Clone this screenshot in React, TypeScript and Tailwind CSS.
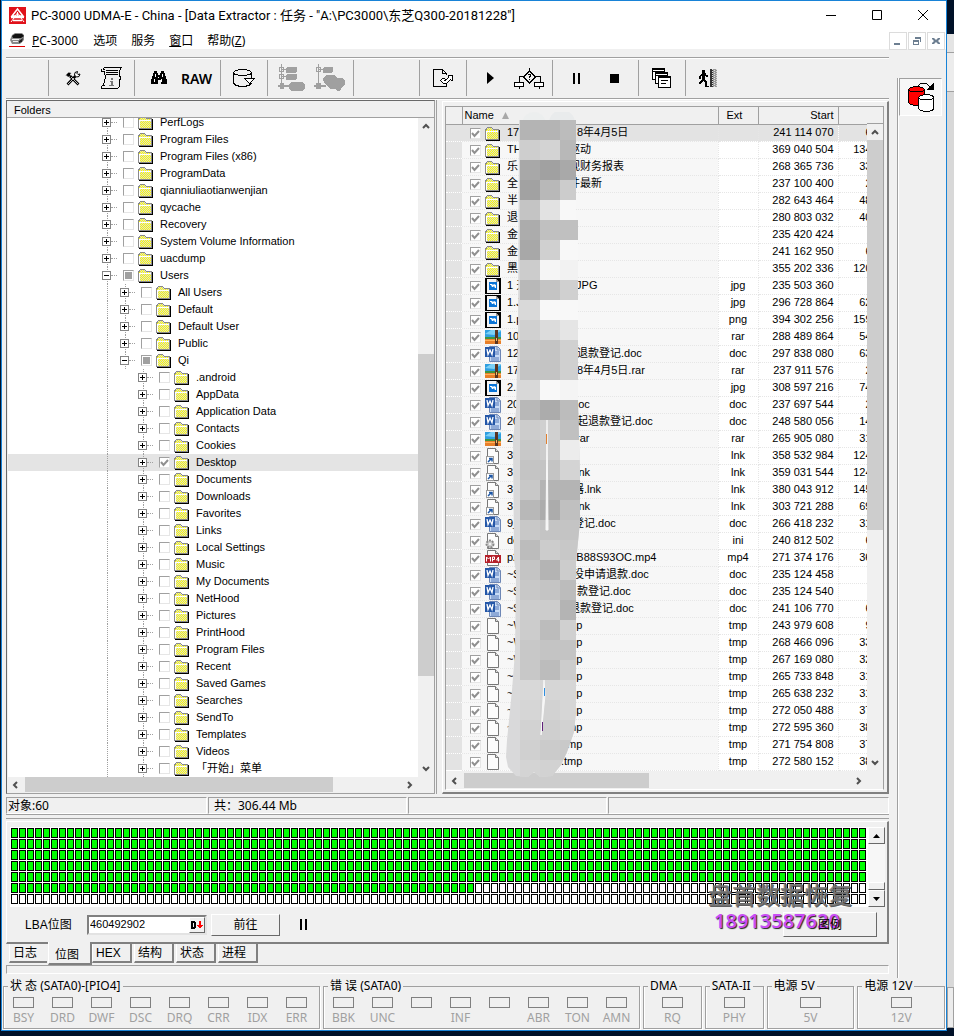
import { useState, type ReactNode } from "react";
import { clsx } from "clsx";

type TreeNode = { name: string; level: number; open?: boolean; check?: "part" | "on" };

const TREE: TreeNode[] = [
  ...["PerfLogs", "Program Files", "Program Files (x86)", "ProgramData", "qianniuliaotianwenjian", "qycache", "Recovery", "System Volume Information", "uacdump"].map((name) => ({ name, level: 0 })),
  { name: "Users", level: 0, open: true, check: "part" },
  ...["All Users", "Default", "Default User", "Public"].map((name) => ({ name, level: 1 })),
  { name: "Qi", level: 1, open: true, check: "part" },
  ...[".android", "AppData", "Application Data", "Contacts", "Cookies"].map((name) => ({ name, level: 2 })),
  { name: "Desktop", level: 2, check: "on" },
  ...["Documents", "Downloads", "Favorites", "Links", "Local Settings", "Music", "My Documents", "NetHood", "Pictures", "PrintHood", "Program Files", "Recent", "Saved Games", "Searches", "SendTo", "Templates", "Videos", "「开始」菜单"].map((name) => ({ name, level: 2 })),
];

type Kind = "dir" | "img" | "rar" | "doc" | "lnk" | "ini" | "mp4" | "tmp";
type Gap = "s" | "m" | "l" | "xl";

// kind, name start, name end, gap, ext, start, size
const FILES: [Kind, string, string, Gap, string, string, string][] = [
  ["dir", "17", "8年4月5日", "xl", "", "241 114 070", "6"],
  ["dir", "TH", "驱动", "m", "", "369 040 504", "134"],
  ["dir", "乐", "视财务报表", "m", "", "268 365 736", "33"],
  ["dir", "全", "件最新", "m", "", "237 100 400", "2"],
  ["dir", "半", "", "m", "", "282 643 464", "48"],
  ["dir", "退", "", "m", "", "280 803 032", "40"],
  ["dir", "金", "", "m", "", "235 420 424", ""],
  ["dir", "金", "", "m", "", "241 162 950", "6"],
  ["dir", "黑", "", "m", "", "355 202 336", "120"],
  ["img", "1 天", ".JPG", "l", "jpg", "235 503 360", ""],
  ["img", "1.J", "", "m", "jpg", "296 728 864", "62"],
  ["img", "1.p", "", "m", "png", "394 302 256", "159"],
  ["rar", "10", "", "m", "rar", "288 489 864", "54"],
  ["doc", "12", "退款登记.doc", "xl", "doc", "297 838 080", "63"],
  ["rar", "17", "8年4月5日.rar", "xl", "rar", "237 911 576", "2"],
  ["img", "2.", "", "m", "jpg", "308 597 216", "74"],
  ["doc", "20", ".doc", "m", "doc", "237 697 544", "2"],
  ["doc", "20", "起退款登记.doc", "xl", "doc", "248 580 056", "14"],
  ["rar", "20", ".rar", "l", "rar", "265 905 080", "31"],
  ["lnk", "39", "", "m", "lnk", "358 532 984", "124"],
  ["lnk", "3", ".lnk", "l", "lnk", "359 031 544", "124"],
  ["lnk", "3", "器.lnk", "l", "lnk", "380 043 912", "145"],
  ["lnk", "3", ".lnk", "l", "lnk", "303 721 288", "69"],
  ["doc", "9_", "登记.doc", "l", "doc", "266 418 232", "31"],
  ["ini", "de", "", "m", "ini", "240 812 502", "6"],
  ["mp4", "p2", "KB88S93OC.mp4", "m", "mp4", "271 374 176", "36"],
  ["doc", "~$", "没申请退款.doc", "l", "doc", "235 124 458", ""],
  ["doc", "~$", "款登记.doc", "xl", "doc", "235 124 540", ""],
  ["doc", "~$", "退款登记.doc", "m", "doc", "241 106 770", "6"],
  ["tmp", "~W", ".tmp", "s", "tmp", "243 979 608", "9"],
  ["tmp", "~W", ".tmp", "s", "tmp", "268 466 096", "33"],
  ["tmp", "~W", ".tmp", "s", "tmp", "267 169 080", "32"],
  ["tmp", "~", ".tmp", "s", "tmp", "265 733 848", "31"],
  ["tmp", "~", ".tmp", "s", "tmp", "265 638 232", "31"],
  ["tmp", "~", ".tmp", "s", "tmp", "272 050 488", "37"],
  ["tmp", "~", ".tmp", "s", "tmp", "272 595 360", "38"],
  ["tmp", "~", ".tmp", "s", "tmp", "271 754 808", "37"],
  ["tmp", "~", ".tmp", "s", "tmp", "272 580 152", "38"],
];

const GAPS: Record<Gap, string> = { s: "w-[54px]", m: "w-[62px]", l: "w-[66px]", xl: "w-[70px]" };

const UI = "font-['Noto_Sans','Noto_Sans_CJK_SC',sans-serif]";
const SMALL = "font-['Liberation_Sans','Noto_Sans_CJK_SC',sans-serif]";
const RAISED = "border border-t-white border-l-white border-r-[#696969] border-b-[#696969] bg-[#f0f0f0]";
const SUNKEN = "border border-t-[#a0a0a0] border-l-[#a0a0a0] border-r-white border-b-white";

function Folder() {
  return (
    <svg width="16" height="16" viewBox="0 0 16 16" shapeRendering="crispEdges" className="shrink-0">
      <defs>
        <pattern id="dither" width="2" height="2" patternUnits="userSpaceOnUse">
          <rect width="2" height="2" fill="#d8d8d8" />
          <rect width="1" height="1" fill="#ffff00" />
          <rect x="1" y="1" width="1" height="1" fill="#ffff00" />
        </pattern>
      </defs>
      <g transform="translate(0 2)">
        <path d="M15 3v11H1v-1h13V3z" fill="#000" />
        <path d="M0 2h1V1h1V0h5v1h1v1h6v11H0z" fill="#8a8a8a" />
        <path d="M1 3h1V1h5v1h1v1h5v9H1z" fill="url(#dither)" />
        <path d="M1 4h12v1H2v7H1z" fill="#fff" />
      </g>
    </svg>
  );
}

function FileIcon({ kind }: { kind: Kind }) {
  if (kind === "dir") return <Folder />;
  const page = (
    <>
      <path d="M2.500.5h8l3 3v12h-11z" fill="#fcfcfc" stroke="#777" />
      <path d="M10.500.5v3h3" fill="#ddd" stroke="#777" />
    </>
  );
  return (
    <svg width="16" height="16" viewBox="0 0 16 16" className="shrink-0">
      {kind === "img" && (
        <>
          <rect width="16" height="16" fill="#000" />
          <path d="M2 1h9l3 3v11H2z" fill="#f4f4f4" />
          <path d="M11 1v3h3z" fill="#999" />
          <rect x="4" y="4" width="8" height="8" fill="#0a74d6" />
          <path d="M5 6h2l1 1 1-1 2 1v3h-1L9 8 8 9H7L6 7H5z" fill="#fff" />
        </>
      )}
      {kind === "rar" && (
        <>
          <rect y="1" width="16" height="7" fill="#2f9fe0" />
          <path d="M0 5l6-4h10v1L9 6z" fill="#7cd0f5" />
          <rect y="8" width="16" height="2" fill="#3f9440" />
          <rect y="10" width="16" height="5" fill="#e8802a" />
          <rect y="11" width="16" height="1" fill="#ffb25c" />
          <rect x="10" y="1" width="3" height="14" fill="#5b3420" />
          <rect x="11" y="9" width="1" height="3" fill="#e8c46a" />
        </>
      )}
      {kind === "doc" && (
        <>
          <path d="M4.500.5h8l3 3v12h-11z" fill="#c9dcf6" stroke="#6d86b5" />
          <path d="M12 1v3h3" fill="none" stroke="#6d86b5" />
          <path d="M10 6h4M10 8h4M6 12h8M6 14h8" stroke="#5478b8" />
          <rect y="1" width="10" height="10" fill="#2457a8" />
          <path d="M2 3l1 5.500L5 4l2 4.500L8 3" fill="none" stroke="#fff" strokeWidth="1.300" />
        </>
      )}
      {(kind === "tmp" || kind === "lnk" || kind === "ini" || kind === "mp4") && page}
      {kind === "lnk" && (
        <>
          <rect x="1.500" y="8.500" width="7" height="7" fill="#fff" stroke="#999" />
          <path d="M3 14l3-3M4 10.500h3v3" fill="none" stroke="#1c56a5" strokeWidth="1.500" />
        </>
      )}
      {kind === "ini" && (
        <>
          <circle cx="5" cy="11" r="3.500" fill="#ccc" stroke="#888" strokeWidth="2" strokeDasharray="2 1" />
          <circle cx="5" cy="11" r="1" fill="#fff" />
        </>
      )}
      {kind === "mp4" && (
        <>
          <rect y="5" width="16" height="8" fill="#b5202a" />
          <path d="M1.500 11.500V7l2 2 2-2v4.500M7.500 11.500V7h2v2.500h-2M13.500 11.500V7l-2 3h3" fill="none" stroke="#fff" />
        </>
      )}
    </svg>
  );
}

function Tick({ state, label, className }: { state?: "on" | "part"; label: string; className?: string }) {
  return (
    <input
      type="checkbox"
      aria-label={label}
      defaultChecked={state === "on"}
      className={clsx(
        "size-[11px] shrink-0 appearance-none border border-t-[#a0a0a0] border-l-[#a0a0a0] border-r-[#e6e6e6] border-b-[#e6e6e6] bg-white",
        state === "part" && "bg-[linear-gradient(#a0a0a0,#a0a0a0)] bg-[length:7px_7px] bg-center bg-no-repeat",
        state === "on" && "bg-[url('data:image/svg+xml,%3Csvg%20xmlns=%22http://www.w3.org/2000/svg%22%20viewBox=%220%200%209%209%22%3E%3Cpath%20d=%22M1%204l2.500%203L8%202%22%20fill=%22none%22%20stroke=%22%23909090%22%20stroke-width=%222%22/%3E%3C/svg%3E')] bg-[length:9px_9px] bg-center bg-no-repeat",
        className,
      )}
    />
  );
}

function Chevron({ dir }: { dir: "up" | "down" | "left" | "right" }) {
  const d = { up: "M1 6l3-3 3 3", down: "M1 2l3 3 3-3", left: "M6 1L3 4l3 3", right: "M2 1l3 3-3 3" }[dir];
  return (
    <svg width="8" height="8" viewBox="0 0 8 8">
      <path d={d} fill="none" stroke="#505050" strokeWidth="2" />
    </svg>
  );
}

function ArrowButton({ dir }: { dir: "up" | "down" | "left" | "right" }) {
  return (
    <button aria-label={dir} className="flex size-4 shrink-0 items-center justify-center">
      <Chevron dir={dir} />
    </button>
  );
}

function TreeRow({ node }: { node: TreeNode }) {
  const selected = node.name === "Desktop";
  return (
    <li className={clsx("flex h-[17px] items-center pl-[86px]", selected && "bg-[#e4e4e4]")}>
      {/* guide lines of the parent levels */}
      {Array.from({ length: node.level }).map((_, i) => (
        <span key={i} className={clsx("ml-[13px] h-[17px] w-[5px]", i === 0 && "border-l border-dotted border-[#a0a0a0]")} />
      ))}
      <span className="relative flex h-[17px] w-[29px] items-center pl-2">
        <span className="absolute top-0 left-[13px] h-[17px] border-l border-dotted border-[#a0a0a0]" />
        <button aria-label={node.open ? "collapse" : "expand"} className="relative flex size-[9px] items-center justify-center border border-[#848484] bg-white">
          <svg width="5" height="5" viewBox="0 0 5 5" shapeRendering="crispEdges">
            <path d={node.open ? "M0 2h5v1H0z" : "M0 2h5v1H0zM2 0h1v5H2z"} />
          </svg>
        </button>
        <span className="w-[6px] border-t border-dotted border-[#a0a0a0]" />
      </span>
      <Tick state={node.check} label={node.name} />
      <span className="ml-1 h-[17px]">
        <Folder />
      </span>
      <span className="ml-[6px] leading-[17px] whitespace-nowrap">{node.name}</span>
    </li>
  );
}

function FolderPanel() {
  return (
    <section className="flex w-[429px] shrink-0 flex-col border border-[#696969] border-r-[#a0a0a0] border-b-[#a0a0a0] bg-white">
      <h2 className="h-[17px] border-b border-[#a0a0a0] bg-[#f0f0f0] pl-[7px] leading-[18px]">Folders</h2>
      <div className="flex h-[659px] border-l border-[#f0f0f0]">
        <div className="min-w-0 flex-1 overflow-hidden">
          <ul className="-mt-1">
            {TREE.map((node, i) => (
              <TreeRow key={i} node={node} />
            ))}
          </ul>
        </div>
        <div className="flex w-4 flex-col bg-[#f0f0f0]">
          <ArrowButton dir="up" />
          <div className="mt-[220px] h-[322px] bg-[#cdcdcd]" />
          <div className="mt-auto">
            <ArrowButton dir="down" />
          </div>
        </div>
      </div>
      <div className="flex h-4 bg-[#f0f0f0] pr-4">
        <ArrowButton dir="left" />
        <div className="ml-[2px] h-[15px] w-[308px] bg-[#cdcdcd]" />
        <div className="ml-auto">
          <ArrowButton dir="right" />
        </div>
      </div>
    </section>
  );
}

// grey levels of the 20px blocks, one string per block row
const MOSAIC = [
  "b4b4bc", "ced3b8", "a8a1a9", "a2b8cc", "c4e2f8", "acc0c0", "a8d0f8", "ccf5f2", "b8c4d0", "d9f8f8",
  "d0dce5", "c8c4d0", "c4c4d0", "d8f8f4", "b8acbc", "ccd0c0", "c8ccec", "c4c4d4", "c8b4b4", "b8acc0",
  "c8c4c4", "bcccc8", "c4b4cc", "c8c4bc", "ccccb4", "ccbcd0", "c8c4c4", "c8bccc", "d8d6d6", "d6d2d6",
  "d2cfd2", "d0cbc9", "d4d2d4",
];

function Mosaic() {
  return (
    <svg className="absolute top-[5px] left-[60px]" width="76" height="668" viewBox="0 0 76 668" aria-hidden="true">
      <defs>
        <clipPath id="stroke">
          <path d="M13 8L12 218 10 298 7 328 8 448 10 460 9 540 6 578 1 628 0 645 2 655 10 664 22 665 28 660 34 665 46 664 55 653 61 640 68 620 70 600V450L74 410V360L72 290V108H70V8z" />
        </clipPath>
      </defs>
      <circle cx="28" cy="12" r="12" fill="#eceeee" />
      <circle cx="56" cy="11" r="13" fill="#e9ebec" />
      <g clipPath="url(#stroke)">
        <rect width="76" height="668" fill="#d9d9da" />
        {MOSAIC.map((row, r) =>
          [0, 1, 2].map((c) => {
            const v = row.slice(c * 2, c * 2 + 2);
            return <rect key={`${r}-${c}`} x={14 + c * 20} y={8 + r * 20} width="20" height="20" fill={`#${v}${v}${v}`} />;
          }),
        )}
        <path d="M41 308l-1 110h2zM38 568l-3 55 4-40z" fill="#f7f7f7" stroke="#f7f7f7" />
        <path d="M40.500 322v10" stroke="#e08030" />
        <path d="M38.500 576v8" stroke="#2f8fe0" />
        <path d="M36.500 610v9" stroke="#60207a" />
      </g>
    </svg>
  );
}

function FileTable() {
  return (
    <section className="mt-px ml-[5px] flex min-w-0 flex-1 flex-col border-t border-l border-white border-r-2 border-b-2 border-r-[#808080] border-b-[#808080] pt-1 pr-[3px] pb-px pl-[2px]">
      <div className="relative border border-[#a0a0a0] border-b-white bg-white">
        <div className="flex">
          <div className="min-w-0 flex-1 overflow-hidden">
            <table className="w-full table-fixed border-collapse">
              <thead>
                <tr className="h-[17px] bg-[#f0f0f0] text-left leading-[16px]">
                  <th className="w-4 border-r border-b border-[#a0a0a0] p-0" />
                  <th className="border-r border-b border-[#a0a0a0] p-0 pl-[2px] font-normal">
                    <span className="flex items-center gap-2">
                      Name
                      <svg width="7" height="7" viewBox="0 0 7 7"><path d="M3.500 0L7 7H0z" fill="#a8a8a8" /></svg>
                    </span>
                  </th>
                  <th className="w-10 border-r border-b border-[#a0a0a0] p-0 pl-2 font-normal">Ext</th>
                  <th className="w-20 border-r border-b border-[#a0a0a0] p-0 pr-1 text-right font-normal">Start</th>
                  <th className="w-[29px] border-b border-[#a0a0a0] p-0" />
                </tr>
              </thead>
              <tbody>
                {FILES.map(([kind, head, tail, gap, ext, start, size], i) => (
                  <tr key={i} className={clsx("h-[17px] leading-[15px]", i === 0 ? "bg-[#e3e3e3]" : "bg-white")}>
                    <td className="border-b border-dotted border-white bg-[#e3e3e3] p-0" />
                    <td className={clsx("border-r border-b border-dotted border-[#e6e6e6] p-0 pl-2", i > 0 && "bg-[#f7f7f7]")}>
                      <span className="flex h-4 items-center whitespace-nowrap">
                        <Tick state="on" label={head + tail} className="mt-px" />
                        <span className="mr-[6px] ml-1 flex">
                          <FileIcon kind={kind} />
                        </span>
                        <span className={GAPS[gap]}>{head}</span>
                        {tail}
                      </span>
                    </td>
                    <td className="border-r border-b border-dotted border-[#e6e6e6] p-0 text-center">{ext}</td>
                    <td className="border-r border-b border-dotted border-[#e6e6e6] p-0 pr-1 text-right">{start}</td>
                    <td className="overflow-hidden border-b border-dotted border-[#e6e6e6] p-0">
                      <span className="block w-[33px] text-right">{size}</span>
                    </td>
                  </tr>
                ))}
              </tbody>
            </table>
          </div>
          <div className="flex w-4 flex-col bg-[#f0f0f0]">
            <div className="h-[17px] border-b border-[#a0a0a0]" />
            <ArrowButton dir="up" />
            <div className="h-[390px] bg-[#cdcdcd]" />
            <div className="mt-auto">
              <ArrowButton dir="down" />
            </div>
          </div>
        </div>
        <div className="flex h-[18px] bg-[#f0f0f0] pt-[2px] pr-4">
          <ArrowButton dir="left" />
          <div className="ml-[2px] h-[15px] w-[185px] bg-[#cdcdcd]" />
          <div className="ml-auto">
            <ArrowButton dir="right" />
          </div>
        </div>
        <Mosaic />
      </div>
    </section>
  );
}

function Tool({ label, children }: { label: string; children: ReactNode }) {
  return (
    <button aria-label={label} className="flex h-8 min-w-8 items-center justify-center">
      {children}
    </button>
  );
}

function Group({ width, children }: { width: string; children?: ReactNode }) {
  return (
    <div className={clsx("flex h-9 shrink-0 items-center justify-center gap-[6px] border-r border-[#a0a0a0]", width)}>
      {children}
    </div>
  );
}

function Toolbar() {
  return (
    <div className="flex h-[42px] items-center overflow-hidden border-t border-b border-[#a0a0a0] shadow-[inset_0_1px_#fff,0_1px_#fff]">
      <Group width="w-[43px]" />
      <Group width="w-[86px]">
        <Tool label="tools">
          <svg width="16" height="15" viewBox="0 0 16 15">
            <path d="M5 5l8.500 8.500M10.500 5L2.500 13.500" stroke="#000" strokeWidth="2.600" />
            <path d="M6 6l7 7M9 7l-6 6" stroke="#f0f0f0" strokeWidth=".8" />
            <path d="M.5 4.500L3.500 1.500l3 .5-1.500 1 .5 1.500L3 6 2 4.500z" fill="#000" />
            <path d="M12.500.5L10 1.500 9.500 4l2 2 2.500-.5L15 3l-2 .5-1-1z" fill="#fff" stroke="#000" />
          </svg>
        </Tool>
        <Tool label="script">
          <svg width="22" height="22" viewBox="0 0 22 22" fill="none" stroke="#000" shapeRendering="crispEdges">
            <path d="M3.500.5h18M1.500 1.500v3h2M21.500.5l-2 3v5l1 2-1 4v3M4.500 3.500v3l1 3-1 5-1 3v1M1.500 18.500h3M1.500 18.500v3h16l2-2v-3M3.500 1.500l1 2" />
            <path d="M6 3.500h12M6 5.500h12M6 7.500h12" />
            <path d="M11 11h2v2h-2zM10 14h3v4h1v1h-5v-1h2v-3h-1z" fill="#777" stroke="none" />
          </svg>
        </Tool>
      </Group>
      <Group width="w-[86px]">
        <Tool label="find">
          <svg width="16" height="14" viewBox="0 0 16 14" shapeRendering="crispEdges">
            <path d="M3 0h3v2h1v2h2V2h1V0h3v2h1v3h1v3h1v5h-6V9H7v4H0V8h1V5h1V2h1z" />
            <path d="M4 3h1v3H4zM3 8h1v3H3zM11 3h1v3h-1zM10 8h1v3h-1zM7 6h1v1H7z" fill="#fff" />
          </svg>
        </Tool>
        <Tool label="raw">
          <span className="font-['Noto_Sans',sans-serif] text-[14px] font-semibold">RAW</span>
        </Tool>
      </Group>
      <Group width="w-[47px]">
        <Tool label="disk">
          <svg width="22" height="18" viewBox="0 0 22 18" fill="none" stroke="#000" shapeRendering="crispEdges">
            <path d="M.5 3.500l2-2h2l1-1h8l1 1h2l2 2v1l-2 1h-2l-1 1h-8l-1-1h-2l-2-1z" />
            <path d="M.5 4v10l2 2h2l1 1h8l1-1h2l2-2M18.500 4v5" />
            <path d="M11.500 9.500h10l-5 5z" fill="#fff" />
          </svg>
        </Tool>
      </Group>
      <Group width="w-[86px]">
        <Tool label="expand all">
          <svg width="28" height="28" viewBox="0 0 28 28" shapeRendering="crispEdges" fill="#a0a0a0">
            <path d="M1.500 3.500h4v4h-4zM1.500 10.500h4v4h-4z" fill="#f0f0f0" stroke="#a0a0a0" />
            <path d="M3 5h6v1H3zM3 12h6v1H3zM3 0h1v24H3zM0 21h12v2H0zM2 19h4v6H2z" />
            <rect x="8" y="3" width="11" height="6" rx="2" />
            <rect x="8" y="10" width="11" height="6" rx="2" />
            <rect x="11" y="18" width="16" height="9" rx="4" />
          </svg>
        </Tool>
        <Tool label="collapse all">
          <svg width="32" height="28" viewBox="0 0 32 28" shapeRendering="crispEdges" fill="#a0a0a0">
            <path d="M2.500 3.500h4v4h-4z" fill="#f0f0f0" stroke="#a0a0a0" />
            <path d="M4 0h1v24H4zM4 5h6v1H4zM0 21h12v2H0zM2 19h5v6H2z" />
            <rect x="9" y="3" width="10" height="6" rx="2" />
            <path d="M9 14l3-3h8l3 3h5l3 3v4l-3 2-2 4h-3l-2-2h-4l-4-3-3-3z" />
          </svg>
        </Tool>
      </Group>
      <Group width="w-[66px]" />
      <Group width="w-[47px]">
        <Tool label="save copy">
          <svg width="20" height="18" viewBox="0 0 20 18" fill="none" stroke="#000" shapeRendering="crispEdges">
            <path d="M13.500 6V4.500l-4-4h-9v17h13v-3M9.500.5v4h4" />
            <path d="M7.500 11.500l2-2h2l1 1-1 1h1l3-3v-2h4v5h-1l-1-1-4 4h-3z" fill="#fff" />
          </svg>
        </Tool>
      </Group>
      <Group width="w-[86px]">
        <Tool label="start">
          <svg width="7" height="12" viewBox="0 0 7 12"><path d="M0 0l7 6-7 6z" /></svg>
        </Tool>
        <Tool label="branch">
          <svg width="30" height="21" viewBox="0 0 30 21" shapeRendering="crispEdges">
            <path d="M15.500 0v3M15.500 3l6 6-6 6-6-6zM9 8.500H5v6M21 8.500h5v6M5 18v3M25 18v3" fill="none" stroke="#000" />
            <path d="M.5 14.500h9v4h-9zM20.500 14.500h9v4h-9z" fill="#fff" stroke="#000" />
            <path d="M13 7h1V6h3v3h-1v1h-1V8h1V7h-2zM15 11h1v1h-1z" />
          </svg>
        </Tool>
      </Group>
      <Group width="w-[86px]">
        <Tool label="pause">
          <svg width="7" height="11" viewBox="0 0 7 11"><path d="M0 0h2v11H0zM5 0h2v11H5z" /></svg>
        </Tool>
        <Tool label="stop">
          <svg width="9" height="9" viewBox="0 0 9 9"><path d="M0 0h9v9H0z" /></svg>
        </Tool>
      </Group>
      <Group width="w-[47px]">
        <Tool label="windows">
          <svg width="20" height="20" viewBox="0 0 20 20" shapeRendering="crispEdges" fill="#fff" stroke="#000">
            <path d="M.5 .5h12v11H.5zM.5 1.500h12M.5 3.500h12" />
            <path d="M3.500 4.500h12v11h-12zM3.500 5.500h12M3.500 7.500h12" />
            <path d="M6.500 8.500h12v11h-12zM6.500 9.500h12M9 12.500h7M9 15.500h5" />
          </svg>
        </Tool>
      </Group>
      <div className="flex items-center pl-[6px]">
        <Tool label="exit">
          <svg width="20" height="19" viewBox="0 0 20 19" shapeRendering="crispEdges">
            <path d="M4 1h3v3h1v2h2v2H8L7 7v4l2 2v4h2v1H7v-4l-2-2-2 3H1v-2h1l2-3V7H3v3H1V7l2-2h1z" />
            <path d="M12 0h3v18h-3z" fill="#333" />
            <path d="M15 0h4v18h-4z" fill="#999" />
            <path d="M14.500 0v18M16.500 1v17M18.500 0v18" stroke="#ddd" strokeDasharray="1 1" />
          </svg>
        </Tool>
      </div>
    </div>
  );
}

function BlockMap() {
  return (
    <div className="flex">
      <div className="min-w-0 flex-1 overflow-hidden bg-white pt-px pb-[3px] pl-px">
        <div className="grid grid-cols-[repeat(107,7px)] gap-px">
          {Array.from({ length: 107 * 7 }).map((_, i) => (
            <span key={i} className={clsx("h-[10px] border border-black", i < 107 * 5 + 58 ? "bg-[#00ff00]" : "bg-white")} />
          ))}
        </div>
      </div>
      <div className="flex w-[17px] flex-col bg-[#f7f7f7]">
        <button aria-label="scroll up" className={clsx("flex h-[17px] items-center justify-center", RAISED)}>
          <svg width="7" height="4" viewBox="0 0 7 4"><path d="M3.500 0L7 4H0z" /></svg>
        </button>
        <div className={clsx("mt-auto h-2", RAISED)} />
        <button aria-label="scroll down" className={clsx("flex h-[17px] items-center justify-center", RAISED)}>
          <svg width="7" height="4" viewBox="0 0 7 4"><path d="M0 0h7L3.500 4z" /></svg>
        </button>
      </div>
    </div>
  );
}

function BottomPanel() {
  const [lba, setLba] = useState("460492902");
  return (
    <section className="relative mt-[2px] border-t border-l border-white border-r-2 border-b-2 border-r-[#808080] border-b-[#808080] pt-[5px] pr-[2px] pl-[3px]">
      <BlockMap />
      <div className="flex h-[35px] items-center pr-2 pl-[15px]">
        <label htmlFor="lba" className="w-[62px] text-[12px]">LBA位图</label>
        <div className="flex h-5 w-[120px] border-2 border-[#808080] border-r-[#e3e3e3] border-b-[#e3e3e3] bg-white">
          <input id="lba" value={lba} onChange={(e) => setLba(e.target.value)} className="min-w-0 flex-1 pl-px text-[11px] outline-none" />
          <button aria-label="format" className={clsx("flex w-4 items-center justify-center", RAISED)}>
            <svg width="12" height="8" viewBox="0 0 12 8" shapeRendering="crispEdges">
              <path d="M0 0h4v1h1v6H4v1H0zM2 2v4h1V2z" fillRule="evenodd" />
              <path d="M8 0h2v4h2L9 8 6 4h2z" fill="#f00" />
            </svg>
          </button>
        </div>
        <button className={clsx("ml-1 h-[22px] w-[69px] text-[12px] leading-5", RAISED)}>前往</button>
        <button aria-label="pause map" className="ml-5 flex">
          <svg width="7" height="11" viewBox="0 0 7 11"><path d="M0 0h2v11H0zM5 0h2v11H5z" /></svg>
        </button>
        <button className={clsx("ml-auto h-[25px] w-[94px] text-[12px]", RAISED)}>
          <span className="relative z-10">图例</span>
        </button>
      </div>
      <div className="pointer-events-none absolute top-[59px] right-[31px] w-[148px] font-['Noto_Sans','Noto_Sans_CJK_SC',sans-serif] whitespace-nowrap">
        <p className="text-[24px] leading-7 font-medium text-[#777777]/90 [text-shadow:1px_1px_0_rgba(50,50,50,0.8)]">盘首数据恢复</p>
        <p className="pl-[6px] text-[20px] leading-6 font-semibold text-[#c94df5] [text-shadow:1px_1px_1px_#222]">18913587620</p>
      </div>
    </section>
  );
}

function Tabs() {
  const tabs = ["日志", "位图", "HEX", "结构", "状态", "进程"];
  return (
    <nav className="flex h-[21px] items-start gap-[2px] pl-[3px] text-[12px]">
      {tabs.map((tab, i) => (
        <button
          key={tab}
          className={clsx(
            "border-b-2 border-l border-l-white border-r-[#808080] border-b-[#808080] bg-[#f0f0f0] pl-[3px] text-left",
            i === 0 && "h-[19px] w-[38px] leading-[19px]",
            i === 1 && "relative -mt-[2px] -mr-[2px] -ml-px h-[23px] w-[44px] border-r-2 pt-1 pl-[6px] leading-[18px]",
            i > 1 && "h-[19px] w-10 border-r-2 leading-[19px]",
          )}
        >
          {tab}
        </button>
      ))}
    </nav>
  );
}

function Leds({ title, leds, grow }: { title: string; leds: string[]; grow: string }) {
  return (
    <fieldset className={clsx("m-0 min-w-0 border border-[#a0a0a0] px-0 pb-[2px] shadow-[inset_1px_0_#fff,1px_1px_#fff]", grow)}>
      <legend className="ml-1 px-[2px] leading-4 whitespace-nowrap">{title}</legend>
      <div className={clsx("flex pt-[3px]", leds.length === 1 && "justify-center")}>
        {leds.map((led, i) => (
          <div key={i} className="flex w-[39px] flex-col items-center">
            <span className="h-[11px] w-[21px] border border-[#808080]" />
            <span className="h-[18px] leading-[19px] text-[#a0a0a0]">{led}</span>
          </div>
        ))}
      </div>
    </fieldset>
  );
}

function LedBar() {
  return (
    <div className={clsx("flex gap-[3px] px-px pb-px text-[12px]", UI)}>
      <Leds title="状 态 (SATA0)-[PIO4]" grow="w-[318px] grow" leds={["BSY", "DRD", "DWF", "DSC", "DRQ", "CRR", "IDX", "ERR"]} />
      <Leds title="错 误 (SATA0)" grow="w-[318px] grow" leds={["BBK", "UNC", "", "INF", "", "ABR", "TON", "AMN"]} />
      <Leds title="DMA" grow="w-[59px]" leds={["RQ"]} />
      <Leds title="SATA-II" grow="w-[59px]" leds={["PHY"]} />
      <Leds title="电源 5V" grow="w-[88px]" leds={["5V"]} />
      <Leds title="电源 12V" grow="w-[88px]" leds={["12V"]} />
    </div>
  );
}

function TitleBar() {
  return (
    <header className={clsx("bg-white text-black", UI)}>
      <div className="flex h-[27px] items-center pt-[2px] pl-[7px]">
        <svg width="17" height="17" viewBox="0 0 17 17">
          <rect width="17" height="17" fill="#e0121b" />
          <path d="M8.500 2L3 9h11zM2 10.500h13M4 13.500h9" fill="none" stroke="#fff" strokeWidth="1.500" />
          <path d="M8.500 5v4M6 9l2.500-3L11 9M2 15l3-4M15 15l-3-4" stroke="#fff" fill="none" />
        </svg>
        <h1 className="ml-[5px] flex-1 font-['Roboto','Noto_Sans_CJK_SC',sans-serif] text-[13px] whitespace-pre">PC-3000 UDMA-E - China - [Data Extractor : 任务 - "A:\PC3000\东芝Q300-20181228"]</h1>
        <div className="flex">
          {["M0 5.500h10", "M.5 .5h9v9h-9z", "M0 0l10 10M10 0L0 10"].map((d, i) => (
            <button key={d} aria-label={["minimize", "maximize", "close"][i]} className="flex w-[46px] justify-center">
              <svg width="11" height="11" viewBox="0 0 11 11"><path d={d} fill="none" stroke="#000" /></svg>
            </button>
          ))}
        </div>
      </div>
      <div className="flex h-[21px] items-center pt-1 pl-[7px] text-[12px]">
        <svg width="16" height="15" viewBox="0 0 16 15">
          <path d="M1 7l2-5 3-2h7l2 2v5l-4 4H3z" fill="#8a8a8a" />
          <path d="M3 3l3-2h7l2 2-3 2H4z" fill="#111" />
          <path d="M3 6h7v1H3zM4 8h5v1H4z" fill="#eee" />
          <path d="M10 8l4-3-1 4-3 1z" fill="#222" />
          <path d="M0 13h16v1H0z" fill="#e00000" />
        </svg>
        <nav className="ml-[7px] flex flex-1 gap-[14px]">
          <button className="mr-px"><u>P</u>C-3000</button>
          <button>选项</button>
          <button>服务</button>
          <button><u>窗</u>口</button>
          <button>帮助(<u>Z</u>)</button>
        </nav>
        <div className="mr-px flex gap-px">
          {["M1 7h6v2H1z", "M3 1h6v5H8V3H3zM1 4h6v5H1zM2 6v2h4V6z", "M1 2h2l2 2 2-2h2v1L7 5l2 2v1H7L5 6 3 8H1V7l2-2-2-2z"].map((d, i) => (
            <button key={d} aria-label={["minimize document", "restore document", "close document"][i]} className="flex h-[18px] w-[18px] items-center justify-center border border-[#dcdcdc]">
              <svg width="10" height="10" viewBox="0 0 10 10"><path d={d} fill="#6d7f91" fillRule="evenodd" /></svg>
            </button>
          ))}
        </div>
      </div>
    </header>
  );
}

export default function App() {
  return (
    <div className={clsx("flex min-h-screen items-start bg-[#001128] pl-px text-[11px] text-black", SMALL)}>
      <main className="min-w-0 flex-1 border border-[#1883d7] bg-[#f0f0f0]">
        <TitleBar />
        <div className="flex">
          <div className="flex min-w-0 flex-1 flex-col pt-2 pl-1">
            <Toolbar />
            <div className="mt-px flex">
              <FolderPanel />
              <div className="w-[2px] border-r border-[#a0a0a0]" />
              <FileTable />
            </div>
            <div className={clsx("mt-[3px] flex h-[17px] gap-px text-[12px] leading-[15px]", UI)}>
              <div className={clsx("w-[201px] pl-px", SUNKEN)}>对象:60</div>
              <div className={clsx("w-[199px] pl-[5px] whitespace-pre", SUNKEN)}>共：306.44 Mb</div>
              <div className={clsx("w-[199px]", SUNKEN)} />
              <div className={clsx("flex-1", SUNKEN)} />
            </div>
            <div className="h-[5px] border-t border-b border-[#a0a0a0]" />
            <BottomPanel />
            <Tabs />
            <div className={clsx("mb-1 h-[9px]", SUNKEN)} />
          </div>
          <aside className="mt-[29px] ml-2 w-[49px] shrink-0 border-l border-[#a0a0a0] shadow-[inset_1px_0_#fff]">
            <button aria-label="copy disk" className={clsx("ml-px flex h-[38px] w-[43px] items-center justify-center bg-[#f7f7f7]", SUNKEN)}>
              <svg width="28" height="30" viewBox="0 0 28 30" shapeRendering="crispEdges">
                <path d="M1.500 7.500l2-2h2l1-1h6l1 1h2l2 2v13l-2 2h-2l-1 1h-6l-1-1h-2l-2-2z" fill="#f00" stroke="#000" />
                <path d="M1.500 8.500l3 1h10l3-1" fill="none" stroke="#000" />
                <path d="M11.500 15.500l2-2h2l1-1h6l1 1h2l1 2v11l-1 2h-2l-1 1h-6l-1-1h-2l-2-2z" fill="#fff" stroke="#000" />
                <path d="M11.500 16.500l3 1h9l3-1" fill="none" stroke="#000" />
                <path d="M10.500 4.500l3-3h6l4 4" fill="none" stroke="#000" />
                <path d="M27 1v7h-8z" />
              </svg>
            </button>
          </aside>
        </div>
        <LedBar />
      </main>
      <div className="flex w-[7px] shrink-0 flex-col self-stretch">
        <div className="h-[34px]" />
        <div className="h-[18px] bg-[#e4e4e4]" />
        <div className="h-10 border-t border-b border-[#a0a0a0] bg-[#ececec]" />
        <div className="h-[895px] bg-[#d8d8d8]" />
        <div className="h-[41px] border border-[#a0a0a0] bg-[#ececec]" />
      </div>
    </div>
  );
}
